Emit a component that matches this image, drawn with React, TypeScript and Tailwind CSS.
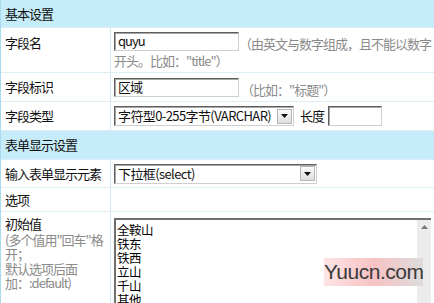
import type { ReactNode } from "react";

const options = ["全鞍山", "铁东", "铁西", "立山", "千山", "其他"];

const inputCls =
  "h-[19px] border border-t-[#5e5e5e] border-l-[#5e5e5e] border-r-[#cfcfcf] border-b-[#cfcfcf] shadow-[inset_1px_1px_0_#a7a7a7] bg-white px-[3px] leading-[16px] text-[#111]";

const Header = ({ title, h }: { title: string; h: string }) => (
  <div className={`flex items-center bg-[#c6ecf9] pl-[4px] border-b border-[#d8eef6] ${h}`}>
    {title}
  </div>
);

const Row = ({
  label,
  h,
  children,
  top,
}: {
  label: ReactNode;
  h: string;
  children?: ReactNode;
  top?: boolean;
}) => (
  <div className={`flex border-b border-[#dcedf4] ${h}`}>
    <div
      className={`w-[110px] shrink-0 border-r border-[#cfe7f1] pl-[4px] flex ${
        top ? "items-start pt-[5px]" : "items-center"
      }`}
    >
      {label}
    </div>
    <div className={`flex-1 pl-[3px] flex ${top ? "items-start pt-[6px]" : "items-center"}`}>
      {children}
    </div>
  </div>
);

const Select = ({ value, w }: { value: string; w: string }) => (
  <div className={`${inputCls} ${w} h-[20px] flex items-center justify-between pr-[1px] overflow-hidden`}>
    <span className="whitespace-nowrap tracking-[-0.6px]">{value}</span>
    <span className="w-[15px] h-[15px] shrink-0 border border-[#b5b5b5] bg-gradient-to-b from-[#fbfbfb] to-[#dedede] flex items-center justify-center">
      <svg width="7" height="4" viewBox="0 0 7 4">
        <path d="M0 0h7L3.5 4z" fill="#111" />
      </svg>
    </span>
  </div>
);

export default function App() {
  return (
    <div className="relative w-[434px] h-[303px] overflow-hidden bg-white border-l border-[#a9d9ec] font-['Noto_Sans_CJK_SC','Liberation_Sans',sans-serif] text-[13px] tracking-[-1px] text-[#111]">
      <Header title="基本设置" h="h-[28px]" />

      <Row label="字段名" h="h-[45px]" top>
        <div className="-mt-[2px]">
          <div className="flex items-end">
            <div className={`${inputCls} w-[125px]`}>quyu</div>
            <span className="text-[#8a8a8a] leading-[15px] whitespace-nowrap">（由英文与数字组成，且不能以数字</span>
          </div>
          <div className="text-[#8a8a8a] leading-[18px] mt-[1px]">开头。比如："title"）</div>
        </div>
      </Row>

      <Row label="字段标识" h="h-[29px]">
        <div className="flex items-end">
          <div className={`${inputCls} w-[125px]`}>区域</div>
          <span className="text-[#8a8a8a] leading-[15px] ml-[2px]">（比如："标题"）</span>
        </div>
      </Row>

      <Row label="字段类型" h="h-[29px]">
        <div className="flex items-center">
          <Select value="字符型0-255字节(VARCHAR)" w="w-[180px]" />
          <span className="ml-[6px]">长度</span>
          <div className={`${inputCls} w-[54px] h-[20px] ml-[4px]`} />
        </div>
      </Row>

      <Header title="表单显示设置" h="h-[29px]" />

      <Row label="输入表单显示元素" h="h-[28px]">
        <Select value="下拉框(select)" w="w-[203px]" />
      </Row>

      <Row label="选项" h="h-[24px]" />

      <Row
        label={
          <div className="leading-[14.5px]">
            <div className="text-[#111]">初始值</div>
            <div className="text-[#8a8a8a] mt-[1px]">
              (多个值用"回车"格
              <br />
              开；
              <br />
              默认选项后面
              <br />
              加：:default)
            </div>
          </div>
        }
        h="h-[110px]"
        top
      >
        <div className="w-[317px] h-[100px] border-t-2 border-l-2 border-t-[#6f6f6f] border-l-[#6f6f6f] flex">
          <div className="flex-1 pl-[1px] pt-[3px] text-[12.5px] tracking-[-0.5px] leading-[14px] text-black">
            {options.map((o) => (
              <div key={o} className="h-[14px]">
                {o}
              </div>
            ))}
          </div>
          <div className="w-[14px] bg-[#ececec] flex justify-center pt-[5px]">
            <svg width="7" height="4" viewBox="0 0 7 4">
              <path d="M0 4h7L3.5 0z" fill="#777" />
            </svg>
          </div>
        </div>
      </Row>

      <div className="absolute left-[323px] top-[258px] h-[28px] flex items-center text-[21px] tracking-[-0.5px] text-[#3a3a3a] font-['Liberation_Sans',sans-serif] bg-gradient-to-r from-[#fde4e4] via-[#f7c2c4] to-[#dcdcdc]">
        Yuucn.com
      </div>
    </div>
  );
}
